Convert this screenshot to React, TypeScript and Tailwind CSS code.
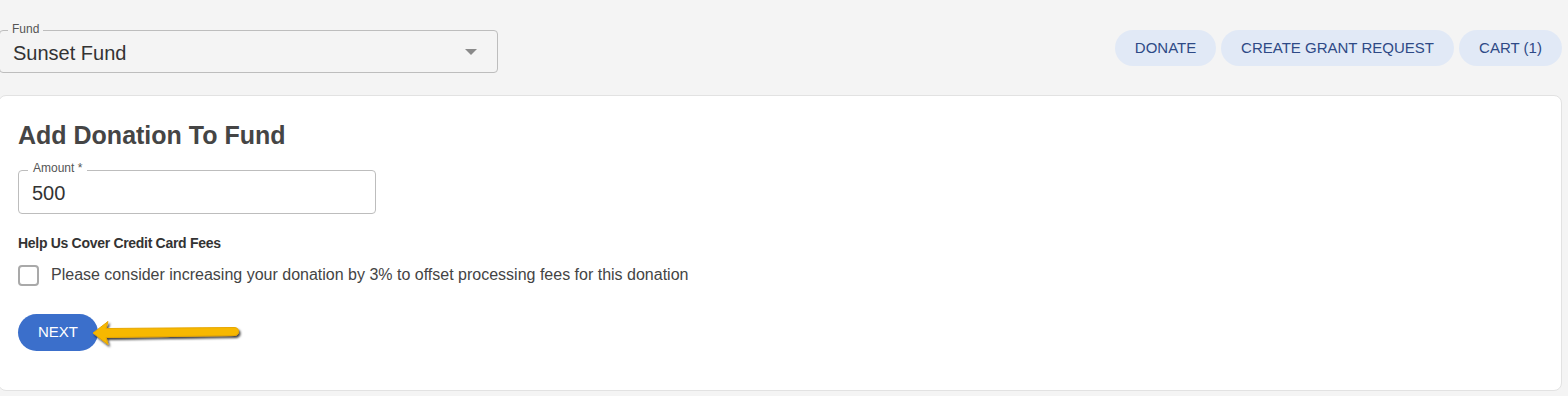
import React from "react";

const Arrow: React.FC = () => (
  <svg width="156" height="30" viewBox="0 0 156 30" className="block">
    <defs>
      <filter id="sh" x="-10%" y="-40%" width="130%" height="200%">
        <feDropShadow dx="1.5" dy="2" stdDeviation="1" floodColor="#000" floodOpacity="0.75" />
      </filter>
    </defs>
    <g filter="url(#sh)">
      <path
        d="M2 14 L17 2.5 L15 9.5 L143 8.5 Q147.5 8.5 147.5 12.5 Q147.5 16.5 143 16.5 L15 18.5 L17 25.5 Z"
        fill="#f7b800"
        stroke="#e7a700"
        strokeWidth="1"
        strokeLinejoin="round"
      />
    </g>
  </svg>
);

const App: React.FC = () => {
  return (
    <div className="w-[1568px] h-[396px] bg-[#f4f4f4] font-['Liberation_Sans',Arial,sans-serif] overflow-hidden">
      {/* top row */}
      <div className="flex items-start justify-between h-[95px] pr-[6px]">
        <div className="relative mt-[30px] ml-[-1px] w-[499px] h-[43px] rounded-[4px] border border-[#bdbdbd] flex items-center pl-[13px] pr-[20px]">
          <span className="absolute left-[8px] top-[-9px] px-[4px] bg-[#f4f4f4] text-[12px] leading-[14px] text-[#555]">
            Fund
          </span>
          <span className="flex-1 text-[20px] text-[#333] mt-[2px]">Sunset Fund</span>
          <span className="w-0 h-0 border-l-[6px] border-r-[6px] border-t-[6px] border-l-transparent border-r-transparent border-t-[#8a8a8a]" />
        </div>
        <div className="flex gap-[5px] mt-[30px]">
          <button className="h-[36px] w-[101px] rounded-full bg-[#e1e9f6] text-[15px] text-[#2e4a86]">
            DONATE
          </button>
          <button className="h-[36px] w-[233px] rounded-full bg-[#e1e9f6] text-[15px] text-[#2e4a86]">
            CREATE GRANT REQUEST
          </button>
          <button className="h-[36px] w-[103px] rounded-full bg-[#e1e9f6] text-[15px] text-[#2e4a86]">
            CART (1)
          </button>
        </div>
      </div>

      {/* card */}
      <div className="ml-[-2px] w-[1564px] h-[296px] bg-white rounded-[8px] border border-[#e2e2e2] pl-[19px] pt-[21px]">
        <h1 className="text-[25px] leading-[36px] font-bold text-[#454545]">Add Donation To Fund</h1>

        <div className="relative mt-[17px] w-[358px] h-[44px] rounded-[4px] border border-[#bdbdbd] flex items-center pl-[13px]">
          <span className="absolute left-[9px] top-[-10px] px-[5px] bg-white text-[12px] leading-[14px] text-[#555]">
            Amount *
          </span>
          <span className="text-[20px] text-[#333] mt-[2px]">500</span>
        </div>

        <div className="mt-[20px] text-[14px] leading-[18px] font-bold text-[#333] tracking-[-0.3px]">
          Help Us Cover Credit Card Fees
        </div>

        <div className="mt-[11px] flex items-center">
          <span className="w-[21px] h-[21px] rounded-[4px] border-2 border-[#a9a9a9] bg-white" />
          <span className="ml-[12px] text-[16px] text-[#444]">
            Please consider increasing your donation by 3% to offset processing fees for this donation
          </span>
        </div>

        <div className="mt-[27px] flex items-center">
          <button className="h-[37px] w-[80px] rounded-full bg-[#3b6fcb] text-white text-[15px]">NEXT</button>
          <div className="ml-[-7px] mt-[2px]">
            <Arrow />
          </div>
        </div>
      </div>
    </div>
  );
};

export default App;
